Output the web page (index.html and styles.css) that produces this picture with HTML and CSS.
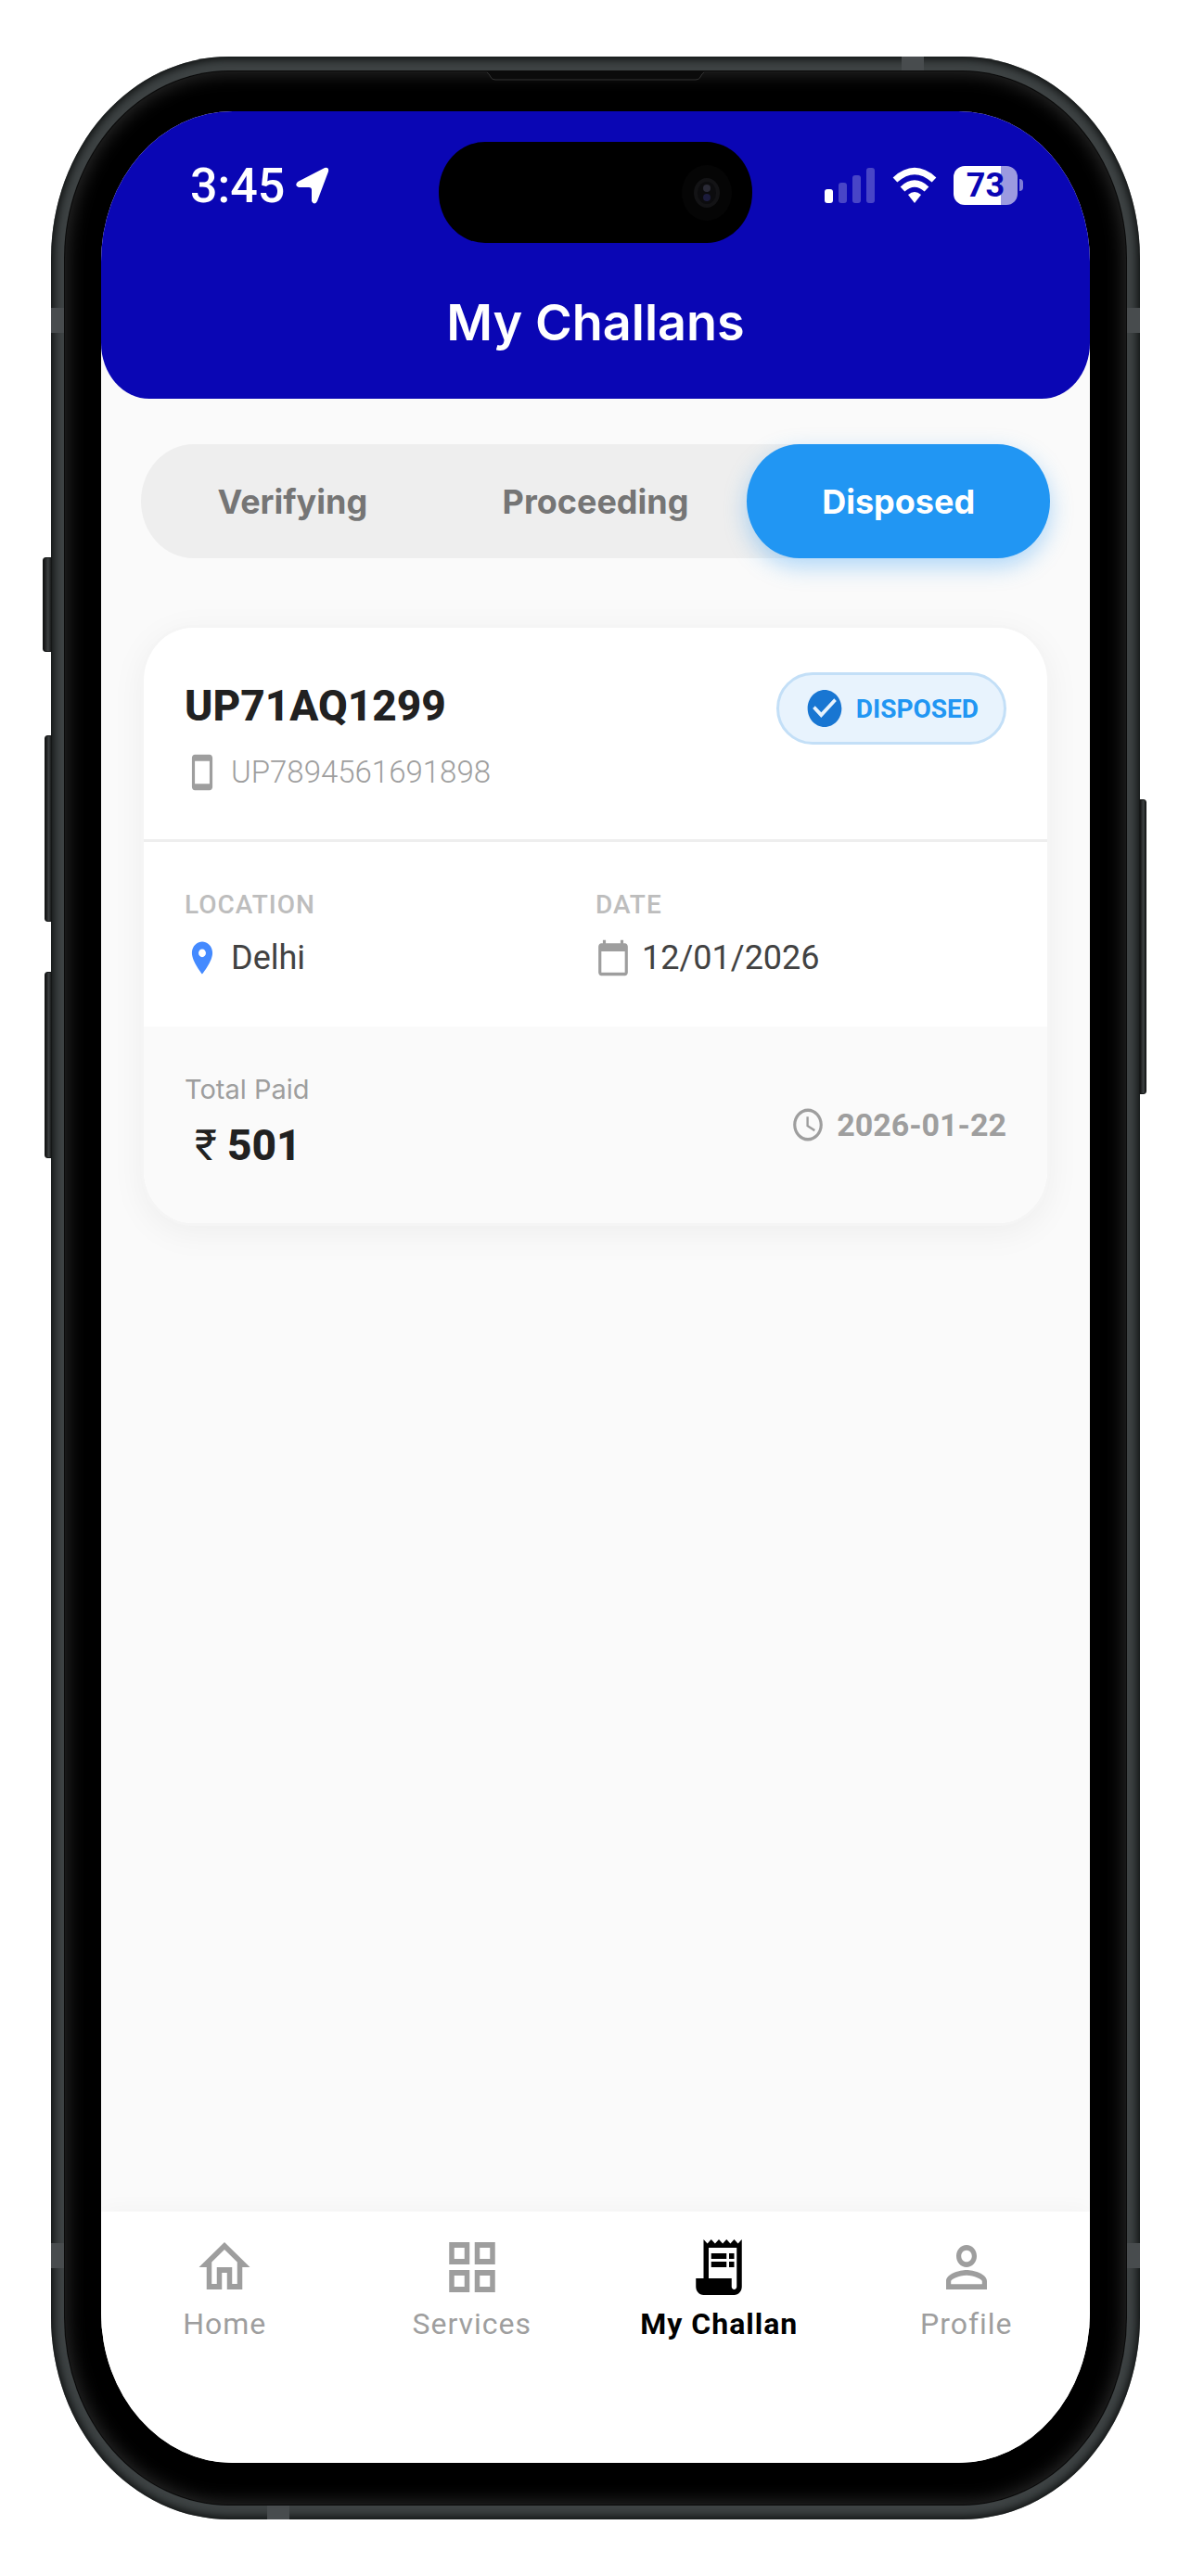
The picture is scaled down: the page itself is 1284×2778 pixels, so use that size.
FILE: index.html
```html
<!DOCTYPE html>
<html lang="en">
  <head>
    <meta charset="UTF-8" />
    <meta name="viewport" content="width=device-width, initial-scale=1.0" />
    <title>My Challans</title>
    <link rel="stylesheet" href="styles.css">
  </head>
  <body>
    <div class="phone">
      <!-- Side buttons -->
      <span class="side-button action"></span>
      <span class="side-button volume-up"></span>
      <span class="side-button volume-down"></span>
      <span class="side-button power"></span>

      <!-- Antenna bands -->
      <span class="band band-top"></span>
      <span class="band band-bottom"></span>
      <span class="band band-left upper"></span>
      <span class="band band-left lower"></span>
      <span class="band band-right upper"></span>
      <span class="band band-right lower"></span>

      <div class="bezel">
        <svg class="earpiece" viewBox="0 0 234 10">
          <path d="M0 0h234l-5 7q-1 2-4 2H9q-3 0-4-2z" fill="#0b0b0b" />
          <path d="M0 1q2 1 4 5 1 3 5 3h216q4 0 5-3 2-4 4-5" fill="none" stroke="#333" />
        </svg>

        <div class="screen">
          <header class="header">
            <div class="island">
              <svg class="camera" viewBox="0 0 54 60">
                <ellipse cx="27" cy="30" rx="27" ry="30" fill="#050505" />
                <ellipse cx="27" cy="30" rx="14" ry="16" fill="#131315" />
                <ellipse cx="27" cy="30" rx="10" ry="12" fill="#0c0c0e" />
                <ellipse cx="27" cy="25" rx="4" ry="4" fill="#2a2a36" />
                <ellipse cx="27" cy="35" rx="4" ry="4" fill="#1c1c3c" />
              </svg>
            </div>

            <div class="status-bar">
              <div class="status-left">
                <span class="clock">3:45</span>
                <svg class="arrow" viewBox="0 0 36 40">
                  <path d="M35 5 23 37q-3 5-6 0V25q0-3-3-3H3q-5-2-1-6L31 1q5-1 4 4z" fill="#fff" />
                </svg>
              </div>
              <div class="status-right">
                <svg class="signal" viewBox="0 0 54 40">
                  <rect x="0" y="24" width="9" height="15" rx="3" fill="#fff" />
                  <g fill="#fff" opacity="0.25">
                    <rect x="15" y="17" width="9" height="22" rx="3" />
                    <rect x="30" y="9" width="9" height="30" rx="3" />
                    <rect x="45" y="1" width="9" height="38" rx="3" />
                  </g>
                </svg>
                <svg class="wifi" viewBox="0 0 48 40">
                  <g fill="none" stroke="#fff" stroke-width="7">
                    <path d="M3 14Q24-5 45 14" />
                    <path d="M11 24Q24 12 37 24" />
                  </g>
                  <path d="M17 30q7-6 14 0l-7 9z" fill="#fff" />
                </svg>
                <div class="battery">
                  <span class="battery-text">73</span>
                </div>
              </div>
            </div>

            <h1>My Challans</h1>
          </header>

          <main class="content">
            <div class="tabs">
              <button class="tab" type="button">Verifying</button>
              <button class="tab" type="button">Proceeding</button>
              <button class="tab active" type="button">Disposed</button>
            </div>

            <!-- Challan card -->
            <article class="card">
              <div class="card-head">
                <div>
                  <h2>UP71AQ1299</h2>
                  <p class="reference">
                    <svg class="icon" viewBox="0 0 24 24" preserveAspectRatio="none"><path d="M17 1.01 7 1c-1.1 0-1.99.9-1.99 2v18c0 1.1.89 2 1.99 2h10c1.1 0 2-.9 2-2V3c0-1.1-.9-1.99-2-1.99zM17 19H7V5h10v14z" /></svg>
                    UP7894561691898
                  </p>
                </div>
                <span class="badge">
                  <svg viewBox="0 0 24 24" preserveAspectRatio="none"><path d="M12 2C6.48 2 2 6.48 2 12s4.48 10 10 10 10-4.48 10-10S17.52 2 12 2zm-2 15-5-5 1.41-1.41L10 14.17l7.59-7.59L19 8l-9 9z" /></svg>
                  DISPOSED
                </span>
              </div>

              <div class="card-details">
                <div>
                  <p class="label">LOCATION</p>
                  <p class="value">
                    <svg class="icon pin" viewBox="0 0 24 24" preserveAspectRatio="none"><path d="M12 2C8.13 2 5 5.13 5 9c0 5.25 7 13 7 13s7-7.75 7-13c0-3.87-3.13-7-7-7zm0 9.5c-1.38 0-2.5-1.12-2.5-2.5s1.12-2.5 2.5-2.5 2.5 1.12 2.5 2.5-1.12 2.5-2.5 2.5z" /></svg>
                    Delhi
                  </p>
                </div>
                <div>
                  <p class="label">DATE</p>
                  <p class="value">
                    <svg class="icon" viewBox="0 0 24 24" preserveAspectRatio="none"><path d="M20 3h-1V1h-2v2H7V1H5v2H4c-1.1 0-2 .9-2 2v16c0 1.1.9 2 2 2h16c1.1 0 2-.9 2-2V5c0-1.1-.9-2-2-2zm0 18H4V8h16v13z" /></svg>
                    12/01/2026
                  </p>
                </div>
              </div>

              <div class="card-foot">
                <div>
                  <p class="total-label">Total Paid</p>
                  <p class="amount"><span class="rupee">₹</span>501</p>
                </div>
                <p class="paid-on">
                  <svg class="icon" viewBox="0 0 24 24" preserveAspectRatio="none"><path d="M11.99 2C6.47 2 2 6.48 2 12s4.47 10 9.99 10C17.52 22 22 17.52 22 12S17.52 2 11.99 2zM12 20c-4.42 0-8-3.58-8-8s3.58-8 8-8 8 3.58 8 8-3.58 8-8 8zM12.5 7H11v6l5.25 3.15.75-1.23-4.5-2.67z" /></svg>
                  2026-01-22
                </p>
              </div>
            </article>
          </main>

          <!-- Bottom navigation -->
          <nav class="bottom-nav">
            <a class="nav-item" href="#">
              <svg viewBox="0 0 24 24" preserveAspectRatio="none"><path d="M12 5.69l5 4.5V18h-2v-6H9v6H7v-7.81l5-4.5M12 3 2 12h3v8h6v-6h2v6h6v-8h3L12 3z" /></svg>
              Home
            </a>
            <a class="nav-item" href="#">
              <svg viewBox="0 0 24 24" preserveAspectRatio="none"><path d="M3 3v8h8V3H3zm6 6H5V5h4v4zm-6 4v8h8v-8H3zm6 6H5v-4h4v4zm4-16v8h8V3h-8zm6 6h-4V5h4v4zm-6 4v8h8v-8h-8zm6 6h-4v-4h4v4z" /></svg>
              Services
            </a>
            <a class="nav-item active" href="#">
              <svg viewBox="0 0 24 24" preserveAspectRatio="none"><path d="M19.5 3.5 18 2l-1.5 1.5L15 2l-1.5 1.5L12 2l-1.5 1.5L9 2 7.5 3.5 6 2v14H3v3c0 1.66 1.34 3 3 3h12c1.66 0 3-1.34 3-3V2l-1.5 1.5zM19 19c0 .55-.45 1-1 1s-1-.45-1-1v-3H8V5h11v14zM9 7h6v2H9zM16 7h2v2h-2zM9 10h6v2H9zM16 10h2v2h-2z" /></svg>
              My Challan
            </a>
            <a class="nav-item" href="#">
              <svg viewBox="0 0 24 24" preserveAspectRatio="none"><path d="M12 5.9c1.16 0 2.1.94 2.1 2.1s-.94 2.1-2.1 2.1S9.9 9.16 9.9 8s.94-2.1 2.1-2.1m0 9c2.97 0 6.1 1.46 6.1 2.1v1.1H5.9V17c0-.64 3.13-2.1 6.1-2.1M12 4C9.79 4 8 5.79 8 8s1.79 4 4 4 4-1.79 4-4-1.79-4-4-4zm0 9c-2.67 0-8 1.34-8 4v3h16v-3c0-2.66-5.33-4-8-4z" /></svg>
              Profile
            </a>
          </nav>
        </div>
      </div>
    </div>
  </body>
</html>
```
FILE: styles.css
```css
* {
  box-sizing: border-box;
}
body {
  margin: 0;
  padding: 61px 55px;
  min-height: 100vh;
  display: flex;
  background-color: #fff;
  font-family: Roboto, Inter, sans-serif;
}
h1,
h2,
p {
  margin: 0;
}

/* phone body */
.phone {
  position: relative;
  flex: 1;
  display: flex;
  padding: 16px 15px;
  background-color: #3e4344;
  border-radius: 192px / 218px;
  box-shadow: inset 0 0 10px 3px #0e1010;
}
.bezel {
  position: relative;
  flex: 1;
  display: flex;
  padding: 43px 39px 45px;
  background-color: #000;
  border-radius: 177px / 202px;
  box-shadow: 0 0 0 1px #0a0a0a, inset 0 0 20px 2px #2c2c2c;
}
.screen {
  flex: 1;
  display: flex;
  flex-direction: column;
  overflow: hidden;
  background-color: #fafafa;
  border-radius: 142px / 162px;
}
.side-button {
  position: absolute;
  left: -9px;
  width: 10px;
  background: linear-gradient(90deg, #111, #3c4041 60%, #1a1c1c);
  border: 1px solid #151717;
  border-radius: 3px 0 0 3px;
}
.action {
  top: 540px;
  height: 102px;
}
.volume-up {
  left: -7px;
  width: 8px;
  top: 732px;
  height: 201px;
}
.volume-down {
  left: -7px;
  width: 8px;
  top: 987px;
  height: 201px;
}
.power {
  left: auto;
  right: -7px;
  width: 8px;
  top: 801px;
  height: 318px;
  border-radius: 0 3px 3px 0;
}
.band {
  position: absolute;
  width: 15px;
  height: 27px;
  background-color: #484c4e;
}
.band-top,
.band-bottom {
  width: 24px;
  height: 16px;
}
.band-top {
  top: 0;
  right: 233px;
}
.band-bottom {
  bottom: 0;
  left: 233px;
}
.band-left {
  left: 0;
}
.band-right {
  right: 0;
}
.upper {
  top: 271px;
}
.lower {
  bottom: 271px;
}
.earpiece {
  position: absolute;
  top: 0;
  left: 50%;
  width: 234px;
  height: 10px;
  margin-left: -117px;
}

/* header */
.header {
  position: relative;
  padding-bottom: 14px;
  background-color: #0a06b4;
  color: #fff;
  border-radius: 0 0 52px 52px / 0 0 60px 60px;
}
.island {
  position: absolute;
  top: 33px;
  left: 50%;
  width: 338px;
  height: 109px;
  margin-left: -169px;
  padding-right: 22px;
  display: flex;
  align-items: center;
  justify-content: flex-end;
  background-color: #000;
  border-radius: 50px / 54px;
}
.camera {
  width: 54px;
  height: 60px;
}
.status-bar {
  display: flex;
  align-items: center;
  justify-content: space-between;
  height: 160px;
  padding: 0 72px 0 96px;
}
.status-left,
.status-right {
  display: flex;
  align-items: center;
}
.clock {
  font-size: 52px;
  font-weight: 500;
}
.arrow {
  width: 36px;
  height: 40px;
  margin-left: 12px;
}
.signal {
  width: 54px;
  height: 40px;
  margin-right: 19px;
}
.wifi {
  width: 48px;
  height: 40px;
  margin-right: 18px;
}
.battery {
  position: relative;
  width: 69px;
  height: 42px;
  margin-right: 6px;
  background: linear-gradient(90deg, #fff 51px, #9c9ae0 51px);
  border-radius: 12px;
  text-align: center;
}
.battery::after {
  content: "";
  position: absolute;
  top: 14px;
  right: -6px;
  width: 4px;
  height: 13px;
  background-color: #7f7cd6;
  border-radius: 0 4px 4px 0;
}
.battery-text {
  color: #0a06b4;
  font-size: 36px;
  line-height: 42px;
  font-weight: 700;
}
.header h1 {
  font-family: Inter, sans-serif;
  font-size: 54px;
  line-height: 136px;
  font-weight: 600;
  text-align: center;
}

/* tabs */
.content {
  flex: 1;
  padding: 49px 43px;
}
.tabs {
  display: flex;
  height: 123px;
  margin-bottom: 72px;
  background-color: #eee;
  border-radius: 57px / 62px;
}
.tab {
  flex: 1;
  padding: 0;
  border: none;
  background: none;
  color: #757575;
  font-family: Inter, sans-serif;
  font-size: 36px;
  font-weight: 700;
  border-radius: 57px / 62px;
  cursor: pointer;
}
.tab.active {
  background-color: #2196f3;
  color: #fff;
  box-shadow: 0 9px 24px rgba(33, 150, 243, 0.35);
}

/* card */
.card {
  border: 3px solid #f5f5f5;
  border-radius: 56px / 60px;
  overflow: hidden;
  background-color: #fff;
  box-shadow: 0 8px 36px rgba(0, 0, 0, 0.05);
}
.card-head {
  display: flex;
  justify-content: space-between;
  align-items: flex-start;
  padding: 48px 44px 51px;
  border-bottom: 3px solid #eee;
}
.card h2 {
  color: #212121;
  font-size: 46px;
  line-height: 72px;
  font-weight: 800;
}
.icon {
  flex: none;
  width: 38px;
  height: 42px;
  fill: #9e9e9e;
}
.pin {
  fill: #448aff;
}
.reference {
  display: flex;
  align-items: center;
  gap: 12px;
  margin-top: 15px;
  color: #9e9e9e;
  font-size: 33px;
  line-height: 42px;
  font-weight: 300;
}
.badge {
  display: flex;
  align-items: center;
  gap: 12px;
  height: 78px;
  padding: 0 27px;
  border: 3px solid #c3dff7;
  border-radius: 39px;
  background-color: #e8f3fd;
  color: #2196f3;
  font-size: 28px;
  font-weight: 700;
}
.badge svg {
  width: 44px;
  height: 48px;
  fill: #1976d2;
}
.card-details {
  display: grid;
  grid-template-columns: 1fr 1fr;
  padding: 48px 44px 51px;
}
.label {
  color: #bdbdbd;
  font-size: 28px;
  line-height: 40px;
  font-weight: 500;
  letter-spacing: 1px;
}
.value {
  display: flex;
  align-items: center;
  gap: 12px;
  margin-top: 14px;
  color: #424242;
  font-size: 36px;
  line-height: 46px;
}
.card-foot {
  display: flex;
  justify-content: space-between;
  align-items: center;
  padding: 48px 44px;
  background-color: #fafafa;
}
.total-label {
  color: #9e9e9e;
  font-family: Inter, sans-serif;
  font-size: 29px;
  line-height: 40px;
}
.amount {
  display: flex;
  margin-top: 4px;
  color: #212121;
  font-size: 46px;
  line-height: 72px;
  font-weight: 800;
}
.rupee {
  width: 46px;
  font-weight: 400;
  text-align: center;
}
.paid-on {
  display: flex;
  align-items: center;
  gap: 12px;
  color: #9e9e9e;
  font-size: 34px;
  font-weight: 700;
}

/* bottom navigation */
.bottom-nav {
  display: flex;
  padding: 24px 0 130px;
  background-color: #fff;
  box-shadow: 0 0 24px rgba(0, 0, 0, 0.04);
}
.nav-item {
  flex: 1;
  display: flex;
  flex-direction: column;
  align-items: center;
  gap: 5px;
  color: #9e9e9e;
  font-size: 32px;
  line-height: 40px;
  letter-spacing: 1px;
  text-decoration: none;
}
.nav-item svg {
  width: 66px;
  height: 72px;
  fill: currentColor;
}
.nav-item.active {
  color: #000;
  font-weight: 700;
}
```
